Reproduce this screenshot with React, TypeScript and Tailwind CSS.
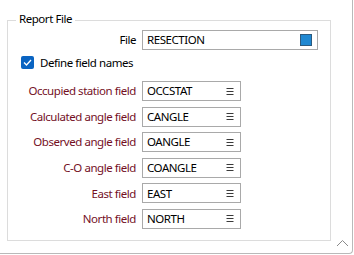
import { type FC } from "react"

const fields = [
    { label: "Occupied station field", value: "OCCSTAT" },
    { label: "Calculated angle field", value: "CANGLE" },
    { label: "Observed angle field", value: "OANGLE" },
    { label: "C-O angle field", value: "COANGLE" },
    { label: "East field", value: "EAST" },
    { label: "North field", value: "NORTH" },
]

const ListIcon: FC = () => (
    <svg width="8" height="7" viewBox="0 0 8 7" className="shrink-0">
        <rect x="0.5" y="0" width="7" height="1" fill="#3a3a3a" />
        <rect x="0.5" y="3" width="7" height="1" fill="#3a3a3a" />
        <rect x="0.5" y="6" width="7" height="1" fill="#3a3a3a" />
    </svg>
)

const FieldRow: FC<{ label: string, value: string }> = ({ label, value }) => (
    <div className="flex flex-row items-center h-[20px]">
        <span className="w-[128px] text-right text-[#74101f] whitespace-nowrap">{label}</span>
        <div className="ml-[6px] w-[99px] h-[20px] border border-[#a9a9a9] bg-white flex flex-row items-center pl-[4px] pr-[6px]">
            <span className="flex-1 text-black">{value}</span>
            <ListIcon />
        </div>
    </div>
)

const App: FC = () => {
    return (
        <div className="w-[354px] h-[255px] bg-white overflow-hidden text-[11.5px] tracking-[-0.45px] leading-none text-black" style={{ fontFamily: '"Noto Sans", sans-serif' }}>
            <div className="relative w-[353px] h-[254px] border-r border-b border-[#b9b9b9] rounded-br-[4px] pt-[20px] pl-[7px]">
                <div className="relative w-[324px] h-[221px] border border-[#dcdcdc]">
                    <span className="absolute left-[8px] -top-[8px] px-[3px] bg-white">Report File</span>

                    <div className="flex flex-row items-center mt-[9px] h-[20px]">
                        <span className="w-[128px] text-right">File</span>
                        <div className="ml-[6px] w-[176px] h-[20px] border border-[#a9a9a9] flex flex-row items-center pl-[4px] pr-[5px]">
                            <span className="flex-1">RESECTION</span>
                            <div className="w-[12px] h-[12px] bg-[#1f88d2] border border-[#2c5a7e]" />
                        </div>
                    </div>

                    <div className="flex flex-row items-center gap-[6px] mt-[6px] ml-[13px] h-[13px]">
                        <div className="w-[13px] h-[13px] rounded-[2px] bg-[#0a64c2] flex items-center justify-center">
                            <svg width="9" height="7" viewBox="0 0 9 7">
                                <path d="M1 3.5 L3.5 6 L8 1" fill="none" stroke="white" strokeWidth="1.3" />
                            </svg>
                        </div>
                        <span>Define field names</span>
                    </div>

                    <div className="flex flex-col gap-[5.6px] mt-[12px]">
                        {fields.map((f) => (
                            <FieldRow key={f.label} label={f.label} value={f.value} />
                        ))}
                    </div>
                </div>
                <svg width="13" height="8" viewBox="0 0 13 8" className="absolute left-[336px] top-[239px]">
                    <path d="M1 7 L6.5 1.5 L12 7" fill="none" stroke="#8a8a8a" strokeWidth="1" />
                </svg>
            </div>
        </div>
    )
}

export default App
